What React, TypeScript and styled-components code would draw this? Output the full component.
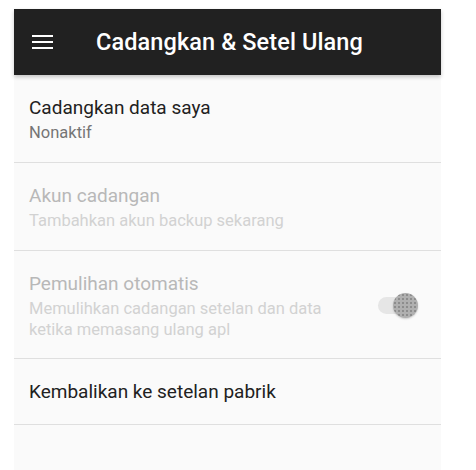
import styled, { createGlobalStyle } from "styled-components";

const GlobalStyle = createGlobalStyle`
  html, body {
    margin: 0;
    padding: 0;
    background: #ffffff;
  }
  body {
    font-family: Roboto, "Noto Sans", "Liberation Sans", sans-serif;
    -webkit-font-smoothing: antialiased;
  }
`;

const Page = styled.div`
  height: 470px;
  padding: 9px 35px 0 14px;
  box-sizing: border-box;
  overflow: hidden;
`;

const Screen = styled.div`
  height: 100%;
  background: #fafafa;
  display: flex;
  flex-direction: column;
`;

const Toolbar = styled.header`
  height: 66px;
  flex-shrink: 0;
  background: #212121;
  display: flex;
  align-items: center;
  box-shadow: 0 2px 4px rgba(0, 0, 0, 0.22);
  position: relative;
  z-index: 1;
`;

const MenuButton = styled.div`
  width: 82px;
  display: flex;
  justify-content: flex-start;
  padding-left: 18px;
  box-sizing: border-box;
`;

const Title = styled.h1`
  margin: 0;
  color: #ffffff;
  font-size: 23.5px;
  font-weight: 500;
  letter-spacing: 0.1px;
`;

const List = styled.div`
  display: flex;
  flex-direction: column;
`;

const Row = styled.div<{ $minHeight: number }>`
  display: flex;
  align-items: center;
  min-height: ${({ $minHeight }) => $minHeight}px;
  padding: 0 23px 0 15px;
  box-sizing: border-box;
  border-bottom: 1px solid #dfdfdf;
`;

const TextBlock = styled.div`
  flex: 1;
  max-width: 340px;
  display: flex;
  flex-direction: column;
`;

const PrefTitle = styled.div<{ $disabled?: boolean }>`
  font-size: 19px;
  line-height: 28px;
  color: ${({ $disabled }) => ($disabled ? "#b8b8b8" : "#212121")};
`;

const Summary = styled.div<{ $disabled?: boolean }>`
  font-size: 16.5px;
  line-height: 21px;
  color: ${({ $disabled }) => ($disabled ? "#d2d2d2" : "#757575")};
`;

const Switch = styled.div`
  margin-left: auto;
  width: 40px;
  height: 24px;
  position: relative;
  flex-shrink: 0;
`;

const Track = styled.div`
  position: absolute;
  left: 0;
  top: 4px;
  width: 36px;
  height: 17px;
  border-radius: 9px;
  background: #e6e6e6;
`;

const Thumb = styled.div`
  position: absolute;
  right: 0;
  top: 0;
  width: 25px;
  height: 25px;
  border-radius: 50%;
  background-color: #b0b0b0;
  background-image: radial-gradient(circle, #8d8d8d 0.8px, transparent 1.2px);
  background-size: 4px 4px;
  box-shadow: 0 1px 2px rgba(0, 0, 0, 0.18);
`;

function MenuIcon() {
  return (
    <svg width="21" height="16" viewBox="0 0 21 16">
      <rect x="0" y="1" width="21" height="2" fill="#ffffff" />
      <rect x="0" y="7" width="21" height="2" fill="#ffffff" />
      <rect x="0" y="13" width="21" height="2" fill="#ffffff" />
    </svg>
  );
}

export default function App() {
  return (
    <>
      <GlobalStyle />
      <Page>
        <Screen>
          <Toolbar>
            <MenuButton>
              <MenuIcon />
            </MenuButton>
            <Title>Cadangkan &amp; Setel Ulang</Title>
          </Toolbar>
          <List>
            <Row $minHeight={88}>
              <TextBlock>
                <PrefTitle>Cadangkan data saya</PrefTitle>
                <Summary>Nonaktif</Summary>
              </TextBlock>
            </Row>
            <Row $minHeight={88}>
              <TextBlock>
                <PrefTitle $disabled>Akun cadangan</PrefTitle>
                <Summary $disabled>Tambahkan akun backup sekarang</Summary>
              </TextBlock>
            </Row>
            <Row $minHeight={108}>
              <TextBlock>
                <PrefTitle $disabled>Pemulihan otomatis</PrefTitle>
                <Summary $disabled>
                  Memulihkan cadangan setelan dan data ketika memasang ulang apl
                </Summary>
              </TextBlock>
              <Switch>
                <Track />
                <Thumb />
              </Switch>
            </Row>
            <Row $minHeight={66}>
              <TextBlock>
                <PrefTitle>Kembalikan ke setelan pabrik</PrefTitle>
              </TextBlock>
            </Row>
          </List>
        </Screen>
      </Page>
    </>
  );
}
